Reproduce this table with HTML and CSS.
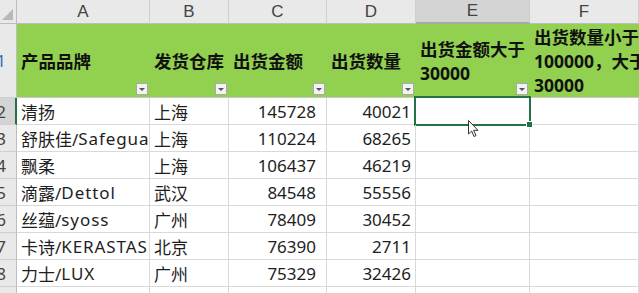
FILE: index.html
```html
<!DOCTYPE html>
<html lang="zh">
<head>
<meta charset="utf-8">
<link rel="stylesheet" href="styles.css">
</head>
<body>
<div class="sheet">
  <div class="ch corner"><span class="tri"></span></div>
  <div class="ch">A</div>
  <div class="ch">B</div>
  <div class="ch">C</div>
  <div class="ch">D</div>
  <div class="ch ch-sel">E</div>
  <div class="ch">F</div>

  <div class="rh rh-blue">1</div>
  <div class="hd">产品品牌<span class="filter"></span></div>
  <div class="hd">发货仓库<span class="filter"></span></div>
  <div class="hd">出货金额<span class="filter"></span></div>
  <div class="hd">出货数量<span class="filter"></span></div>
  <div class="hd">出货金额大于<br>30000<span class="filter"></span></div>
  <div class="hd">出货数量小于<br>100000，大于<br>30000</div>

  <div class="rh rh-sel">2</div>
  <div class="c">清扬</div><div class="c">上海</div><div class="c n nc">145728</div><div class="c n">40021</div><div class="c sel"><span class="handle"></span></div><div class="c"></div>

  <div class="rh">3</div>
  <div class="c">舒肤佳/<span class="lat">Safeguard</span></div><div class="c">上海</div><div class="c n nc">110224</div><div class="c n">68265</div><div class="c"></div><div class="c"></div>

  <div class="rh">4</div>
  <div class="c">飘柔</div><div class="c">上海</div><div class="c n nc">106437</div><div class="c n">46219</div><div class="c"></div><div class="c"></div>

  <div class="rh">5</div>
  <div class="c">滴露/<span class="lat">Dettol</span></div><div class="c">武汉</div><div class="c n nc">84548</div><div class="c n">55556</div><div class="c"></div><div class="c"></div>

  <div class="rh">6</div>
  <div class="c">丝蕴/<span class="lat">syoss</span></div><div class="c">广州</div><div class="c n nc">78409</div><div class="c n">30452</div><div class="c"></div><div class="c"></div>

  <div class="rh">7</div>
  <div class="c">卡诗/<span class="lat">KERASTASE</span></div><div class="c">北京</div><div class="c n nc">76390</div><div class="c n">2711</div><div class="c"></div><div class="c"></div>

  <div class="rh">8</div>
  <div class="c">力士/<span class="lat">LUX</span></div><div class="c">广州</div><div class="c n nc">75329</div><div class="c n">32426</div><div class="c"></div><div class="c"></div>

  <div class="rh">9</div>
  <div class="c">海飞丝/<span class="lat">H&amp;S</span></div><div class="c">广州</div><div class="c n nc">64678</div><div class="c n">16334</div><div class="c"></div><div class="c"></div>
</div>
<svg class="cursor" width="12" height="18" viewBox="0 0 12 18">
  <path d="M0.5 0.5 L0.5 14 L3.6 11 L6 16.5 L8 15.6 L5.7 10.3 L10 10.3 Z" fill="#ffffff" stroke="#333333" stroke-width="1" stroke-linejoin="round"/>
</svg>
</body>
</html>
```

FILE: styles.css
```css
html, body {
  margin: 0;
  padding: 0;
  background: #ffffff;
  overflow: hidden;
  width: 639px;
  height: 293px;
}

body {
  position: relative;
  font-family: "Noto Sans", "Noto Sans CJK SC", sans-serif;
  color: #1e1e1e;
}

.sheet {
  display: grid;
  grid-template-columns: 17px 133px 79px 98px 89px 114px 109px;
  grid-template-rows: 24px 74px repeat(8, 27px);
  height: 293px;
  overflow: hidden;
}

.ch {
  box-sizing: border-box;
  background: #e9e9e9;
  border-right: 1px solid #cfcfcf;
  border-bottom: 1px solid #bdbdbd;
  display: flex;
  align-items: center;
  justify-content: center;
  font-size: 17px;
  color: #444444;
  font-family: "Liberation Sans", "Noto Sans", sans-serif;
}

.corner {
  position: relative;
  background: #e9e9e9;
  border-right: 1px solid #bdbdbd;
}

.tri {
  position: absolute;
  right: 3px;
  bottom: 3px;
  width: 0;
  height: 0;
  border-left: 11px solid transparent;
  border-bottom: 11px solid #b8b8b8;
}

.ch-sel {
  background: #d4d4d4;
  border-bottom: 2px solid #a8a8a8;
}

.rh {
  box-sizing: border-box;
  background: #e9e9e9;
  border-right: 1px solid #bdbdbd;
  border-bottom: 1px solid #cfcfcf;
  display: flex;
  align-items: center;
  justify-content: flex-end;
  padding-right: 10px;
  font-size: 17px;
  color: #444444;
  overflow: hidden;
  white-space: nowrap;
}

.rh-blue {
  color: #2f6fb5;
}

.rh-sel {
  background: #d4d4d4;
  border-right: 2px solid #217346;
  padding-right: 9px;
}

.hd {
  position: relative;
  box-sizing: border-box;
  background: #92d050;
  border-bottom: 1px solid #c9c9c9;
  display: flex;
  align-items: center;
  padding-left: 4px;
  font-size: 17.5px;
  font-weight: bold;
  line-height: 24px;
  color: #111111;
  white-space: nowrap;
  overflow: hidden;
}

.filter {
  position: absolute;
  right: 2px;
  bottom: 2px;
  width: 12px;
  height: 12px;
  box-sizing: border-box;
  background: #f2f2f2;
  border: 1px solid #a9a9a9;
  display: flex;
  align-items: center;
  justify-content: center;
}

.filter::after {
  content: "";
  width: 0;
  height: 0;
  border-left: 3px solid transparent;
  border-right: 3px solid transparent;
  border-top: 3px solid #555555;
}

.c {
  position: relative;
  box-sizing: border-box;
  border-right: 1px solid #d9d9d9;
  border-bottom: 1px solid #d9d9d9;
  display: flex;
  align-items: center;
  padding-left: 4px;
  padding-right: 4px;
  font-size: 17px;
  white-space: nowrap;
  overflow: hidden;
}

.lat {
  letter-spacing: 0.9px;
}

.n {
  justify-content: flex-end;
}

.nc {
  padding-right: 10px;
}

.sel {
  overflow: visible;
}

.sel::after {
  content: "";
  position: absolute;
  left: -2px;
  top: -2px;
  right: -2px;
  bottom: -2px;
  border: 2px solid #217346;
}

.handle {
  position: absolute;
  right: -4px;
  bottom: -4px;
  width: 5px;
  height: 5px;
  background: #217346;
  border: 1px solid #ffffff;
  z-index: 2;
}

.cursor {
  position: absolute;
  left: 468px;
  top: 120px;
}
```
